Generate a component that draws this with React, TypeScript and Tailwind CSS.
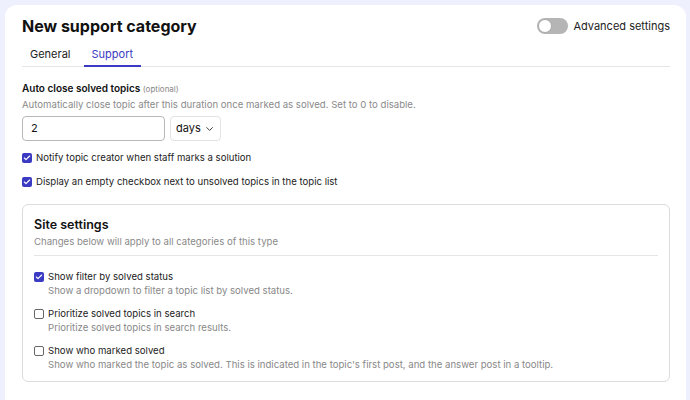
import { ChevronDown, Check } from 'lucide-react';

function Box({ checked }: { checked?: boolean }) {
    return checked ? (
        <span className="flex h-[10px] w-[10px] shrink-0 items-center justify-center rounded-[2px] bg-[#3a3ac2]">
            <Check className="h-[8px] w-[8px] text-white" strokeWidth={3.5} />
        </span>
    ) : (
        <span className="h-[10px] w-[10px] shrink-0 rounded-[2px] border border-[#666] bg-white" />
    );
}

function SiteSetting({ label, desc, checked }: { label: string; desc: string; checked?: boolean }) {
    return (
        <div>
            <label className="flex items-center gap-[4px] text-[9.6px] leading-[13px] text-[#222]">
                <Box checked={checked} />
                {label}
            </label>
            <p className="mt-[1px] pl-[14px] text-[9.6px] leading-[13px] text-[#888]">{desc}</p>
        </div>
    );
}

export default function App() {
    return (
        <div className="h-[400px] overflow-hidden bg-[#eef0fd] pl-[5px] pr-[4px] pt-[5px] font-['Inter',sans-serif]">
            <div className="h-[420px] rounded-[12px] bg-white pl-[17px] pr-[16px] pt-[11px]">
                {/* header */}
                <div className="flex items-start justify-between">
                    <h1 className="text-[16px] font-bold leading-[20px] text-[#111]">New support category</h1>
                    <div className="mt-[2px] flex items-center gap-[5px]">
                        <span className="relative h-[16px] w-[31px] rounded-full bg-[#b5b5b5]">
                            <span className="absolute left-[1px] top-[1px] h-[14px] w-[14px] rounded-full border border-[#aaa] bg-white" />
                        </span>
                        <span className="text-[11px] leading-[16px] text-[#222]">Advanced settings</span>
                    </div>
                </div>

                {/* tabs */}
                <div className="mt-[11px] flex gap-[5px] border-b border-[#e6e6e6] text-[11px] leading-[14px]">
                    <div className="px-[8px] pb-[5px] text-[#222]">General</div>
                    <div className="-mb-px border-b-2 border-[#3a3ac2] px-[8px] pb-[4px] text-[#3a3ac2]">Support</div>
                </div>

                {/* auto close */}
                <div className="mt-[15px]">
                    <div className="text-[10px] font-semibold leading-[13px] text-[#111]">
                        Auto close solved topics <span className="text-[8px] font-normal text-[#888]">(optional)</span>
                    </div>
                    <p className="mt-[2px] text-[9.6px] leading-[13px] text-[#8a8a8a]">
                        Automatically close topic after this duration once marked as solved. Set to 0 to disable.
                    </p>
                    <div className="mt-[5px] flex gap-[5px]">
                        <div className="flex h-[25px] w-[143px] items-center rounded-[4px] border border-[#b8b8b8] px-[8px] text-[11px] text-[#111]">
                            2
                        </div>
                        <div className="flex h-[25px] w-[51px] items-center gap-[3px] rounded-[4px] border border-[#e3e3e3] px-[5px] text-[11px] text-[#111]">
                            days
                            <ChevronDown className="h-[12px] w-[12px]" strokeWidth={1.75} />
                        </div>
                    </div>
                </div>

                <div className="mt-[10px] flex flex-col gap-[11px]">
                    <label className="flex items-center gap-[4px] text-[9.6px] leading-[13px] text-[#222]">
                        <Box checked />
                        Notify topic creator when staff marks a solution
                    </label>
                    <label className="flex items-center gap-[4px] text-[9.6px] leading-[13px] text-[#222]">
                        <Box checked />
                        Display an empty checkbox next to unsolved topics in the topic list
                    </label>
                </div>

                {/* site settings */}
                <div className="mt-[16px] rounded-[6px] border border-[#dcdcdc] px-[11px] pb-[10px] pt-[12px]">
                    <h2 className="text-[12.5px] font-semibold leading-[16px] text-[#111]">Site settings</h2>
                    <p className="mt-[2px] text-[9.6px] leading-[13px] text-[#8a8a8a]">Changes below will apply to all categories of this type</p>
                    <div className="mb-[14px] mt-[7px] border-t border-[#e6e6e6]" />
                    <div className="flex flex-col gap-[10px]">
                        <SiteSetting
                            checked
                            label="Show filter by solved status"
                            desc="Show a dropdown to filter a topic list by solved status."
                        />
                        <SiteSetting
                            label="Prioritize solved topics in search"
                            desc="Prioritize solved topics in search results."
                        />
                        <SiteSetting
                            label="Show who marked solved"
                            desc="Show who marked the topic as solved. This is indicated in the topic's first post, and the answer post in a tooltip."
                        />
                    </div>
                </div>
            </div>
        </div>
    );
}
